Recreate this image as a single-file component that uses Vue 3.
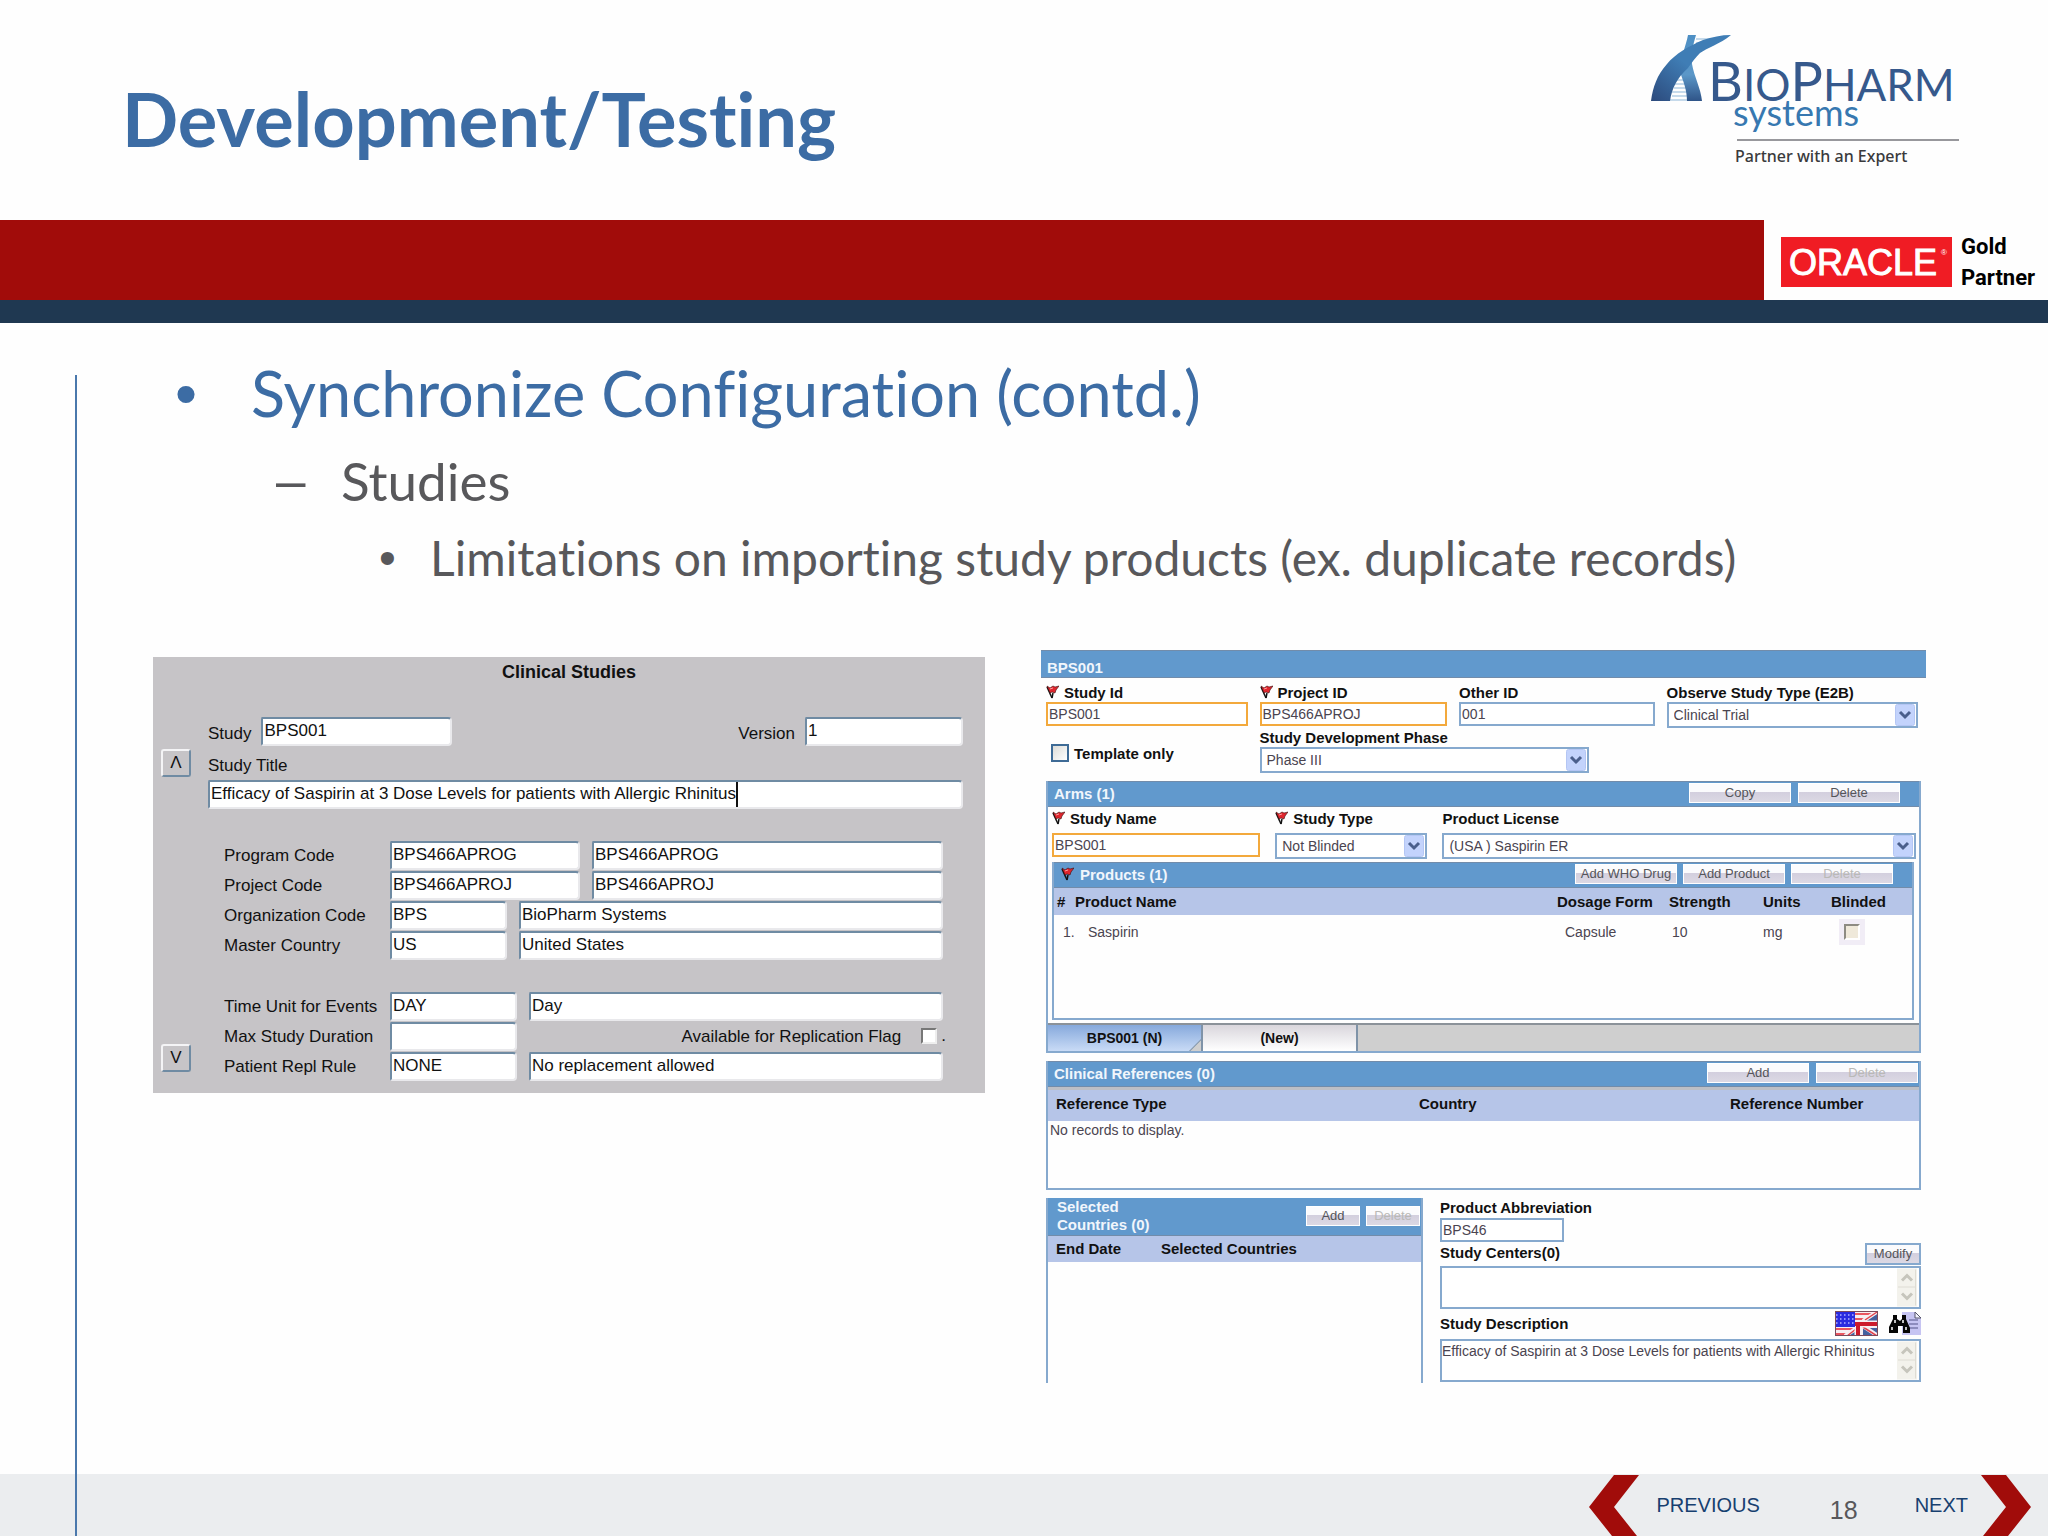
<template>
  <div class="slide">
    <header class="top">
      <h1>Development/Testing</h1>
      <svg class="brand" width="320" height="150" viewBox="0 0 320 150" role="img" aria-label="BioPharm Systems">
        <defs>
          <linearGradient id="helixA" x1="0" y1="1" x2="1" y2="0">
            <stop offset="0" stop-color="#2c4a7c" />
            <stop offset="0.5" stop-color="#3f7db5" />
            <stop offset="1" stop-color="#3f7db5" />
          </linearGradient>
          <linearGradient id="helixB" x1="0" y1="0" x2="0" y2="1">
            <stop offset="0" stop-color="#4d8fc4" />
            <stop offset="0.6" stop-color="#5b97c8" />
            <stop offset="1" stop-color="#2f5488" />
          </linearGradient>
        </defs>
        <g stroke="#8db6d8" stroke-width="1">
          <path d="M46 17h24M46 21h12M44 26h10M26 58h10M24 62h12M24 66h14M22 70h16M22 74h18M20 78h22" />
        </g>
        <path d="M38 13h8c-3 10-5 19-4 29 2 12 9 25 10 37H37c0-12-4-20-7-29 0-13 6-26 8-37z" fill="url(#helixB)" />
        <path d="M81 13C70 22 57 26 50 31 46 35 42 40 38 46 27 56 22 66 20 79H1c2-14 6-26 16-37C25 32 39 24 53 18c9-3 18-5 28-5z" fill="url(#helixA)" />
        <text class="brand-name" x="58" y="79"><tspan class="cap">B</tspan>IO<tspan class="cap">P</tspan>HARM</text>
        <text class="brand-sub" x="83" y="104">systems</text>
        <path d="M87 118h222" stroke="#98989c" stroke-width="2" />
        <text class="brand-tag" x="85" y="140">Partner with an Expert</text>
      </svg>
    </header>

    <div class="band">
      <div class="band-red"></div>
      <div class="partner">
        <svg class="oracle" width="171" height="50" viewBox="0 0 171 50" role="img" aria-label="Oracle">
          <rect width="171" height="50" fill="#f01c24" />
          <text x="8" y="38" class="oracle-text">ORACLE</text>
          <text x="160" y="18" class="oracle-reg">®</text>
        </svg>
        <div class="partner-level">Gold<br>Partner</div>
      </div>
    </div>
    <div class="band-navy"></div>

    <main class="body">
      <ul class="outline">
        <li class="lvl1"><span class="mark">•</span>Synchronize Configuration (contd.)</li>
        <li class="lvl2"><span class="mark">–</span>Studies</li>
        <li class="lvl3"><span class="mark">•</span>Limitations on importing study products (ex. duplicate records)</li>
      </ul>

      <div class="shots">
        <section class="oc">
          <h2>Clinical Studies</h2>
          <div class="oc-cols">
            <div class="oc-nav">
              <button type="button" aria-label="Previous">Λ</button>
              <button type="button" aria-label="Next">V</button>
            </div>
            <div class="oc-form">
              <div class="oc-line">
                <label for="oc-study">Study</label>
                <input id="oc-study" class="sunk w-code" v-model="oc.study">
                <label for="oc-version" class="push">Version</label>
                <input id="oc-version" class="sunk w-ver" v-model="oc.version">
              </div>
              <label for="oc-title" class="oc-title-label">Study Title</label>
              <div class="sunk title-box">
                <input id="oc-title" v-model="oc.title"><i class="caret"></i>
              </div>
              <div class="oc-rows">
                <div v-for="row in ocRows" :key="row.id" class="oc-row" :class="row.cls">
                  <label :for="row.id">{{ row.label }}</label>
                  <input :id="row.id" class="sunk code" v-model="row.code">
                  <input v-if="row.name !== null" class="sunk name" :aria-label="row.label + ' name'" v-model="row.name">
                  <div v-else class="flag-cell">
                    <label for="oc-repl">Available for Replication Flag</label>
                    <input id="oc-repl" type="checkbox" class="mini-check"><span>.</span>
                  </div>
                </div>
              </div>
            </div>
          </div>
        </section>

        <section class="argus">
          <h2 class="bar main-bar">BPS001</h2>

          <div class="study-grid">
            <div class="field">
              <label for="a-id"><svg class="req"><use href="#req" /></svg>Study Id</label>
              <input id="a-id" class="box required" value="BPS001">
            </div>
            <div class="field">
              <label for="a-proj"><svg class="req"><use href="#req" /></svg>Project ID</label>
              <input id="a-proj" class="box required" value="BPS466APROJ">
            </div>
            <div class="field">
              <label for="a-other">Other ID</label>
              <input id="a-other" class="box" value="001">
            </div>
            <div class="field">
              <label for="a-obs">Observe Study Type (E2B)</label>
              <div class="drop">
                <select id="a-obs"><option>Clinical Trial</option></select>
                <svg class="arrow"><use href="#arrow" /></svg>
              </div>
            </div>
            <div class="template">
              <input id="a-tpl" type="checkbox" class="tick"><label for="a-tpl">Template only</label>
            </div>
            <div class="field phase">
              <label for="a-phase">Study Development Phase</label>
              <div class="drop">
                <select id="a-phase"><option>Phase III</option></select>
                <svg class="arrow"><use href="#arrow" /></svg>
              </div>
            </div>
          </div>

          <div class="group arms">
            <div class="bar">
              <h3>Arms (1)</h3>
              <button type="button">Copy</button>
              <button type="button">Delete</button>
            </div>
            <div class="arm-grid">
              <div class="field">
                <label for="a-name"><svg class="req"><use href="#req" /></svg>Study Name</label>
                <input id="a-name" class="box required" value="BPS001">
              </div>
              <div class="field">
                <label for="a-type"><svg class="req"><use href="#req" /></svg>Study Type</label>
                <div class="drop">
                  <select id="a-type"><option>Not Blinded</option></select>
                  <svg class="arrow"><use href="#arrow" /></svg>
                </div>
              </div>
              <div class="field">
                <label for="a-lic">Product License</label>
                <div class="drop">
                  <select id="a-lic"><option>(USA ) Saspirin ER</option></select>
                  <svg class="arrow"><use href="#arrow" /></svg>
                </div>
              </div>
            </div>
            <div class="group products">
              <div class="bar">
                <svg class="req"><use href="#req" /></svg>
                <h3>Products (1)</h3>
                <button type="button">Add WHO Drug</button>
                <button type="button">Add Product</button>
                <button type="button" disabled>Delete</button>
              </div>
              <table>
                <thead>
                  <tr>
                    <th class="c-num">#</th>
                    <th>Product Name</th>
                    <th class="c-form">Dosage Form</th>
                    <th class="c-str">Strength</th>
                    <th class="c-unit">Units</th>
                    <th class="c-blind">Blinded</th>
                  </tr>
                </thead>
                <tbody>
                  <tr v-for="(p, i) in products" :key="p.name">
                    <td class="num">{{ i + 1 }}.</td>
                    <td class="pname">{{ p.name }}</td>
                    <td class="pform">{{ p.form }}</td>
                    <td class="pstr">{{ p.strength }}</td>
                    <td>{{ p.units }}</td>
                    <td><span class="blind"><input type="checkbox" class="mini-check" aria-label="Blinded" disabled></span></td>
                  </tr>
                </tbody>
              </table>
            </div>
            <div class="tabs">
              <button type="button" class="tab active">BPS001 (N)</button>
              <button type="button" class="tab">(New)</button>
            </div>
          </div>

          <div class="group refs">
            <div class="bar">
              <h3>Clinical References (0)</h3>
              <button type="button">Add</button>
              <button type="button" disabled>Delete</button>
            </div>
            <table>
              <thead>
                <tr>
                  <th>Reference Type</th>
                  <th class="c-country">Country</th>
                  <th class="c-refnum">Reference Number</th>
                </tr>
              </thead>
              <tbody>
                <tr><td colspan="3" class="empty">No records to display.</td></tr>
              </tbody>
            </table>
          </div>

          <div class="lower">
            <div class="group countries">
              <div class="bar">
                <h3>Selected Countries (0)</h3>
                <button type="button">Add</button>
                <button type="button" disabled>Delete</button>
              </div>
              <table>
                <thead>
                  <tr><th class="c-end">End Date</th><th>Selected Countries</th></tr>
                </thead>
              </table>
            </div>
            <div class="details">
              <label for="a-abbr">Product Abbreviation</label>
              <input id="a-abbr" class="box abbr" value="BPS46">
              <div class="detail-head">
                <label for="a-centers">Study Centers(0)</label>
                <button type="button" class="modify">Modify</button>
              </div>
              <div class="memo">
                <textarea id="a-centers"></textarea>
                <svg class="scroll"><use href="#scroll" /></svg>
              </div>
              <div class="detail-head icons">
                <label for="a-desc">Study Description</label>
                <svg width="43" height="25" viewBox="0 0 43 25">
                  <rect width="43" height="25" fill="#f6eef2" />
                  <path d="M20 3h22M20 8h14M0 18h18M0 23h12" stroke="#ea5560" stroke-width="2" />
                  <path d="M10 25 19 17h5v8zM28 25v-8h15v8zM28 10 43 0v10z" fill="#44609f" />
                  <path d="M22 17l-12 8M28 15l15 10M28 10 43 0" stroke="#f6eef2" stroke-width="4" />
                  <path d="M30 9 42 1M28 16l14 9M21 18l-9 7" stroke="#e0404c" stroke-width="1.500" />
                  <path d="M19 13h24M23 12v13" stroke="#f6eef2" stroke-width="7" />
                  <path d="M19 13h24M23 12v13" stroke="#cc1a2c" stroke-width="4" />
                  <rect width="20" height="16" fill="#2a2ae0" />
                  <path d="M1 4h18M1 8h18M1 12h18" stroke="#b4b4ff" stroke-width="1.500" stroke-dasharray="1.500 2.500" />
                  <rect x="0.500" y="0.500" width="42" height="24" fill="none" stroke="#7b4a5c" />
                </svg>
                <svg width="32" height="25" viewBox="0 0 32 25">
                  <path d="M13 1h13l6 6v17H13z" fill="#c6c4f2" />
                  <path d="M26 1v6h6z" fill="#f4f4ff" stroke="#55556a" />
                  <path d="M20 9h9M20 13h9M20 17h9" stroke="#55558a" />
                  <path d="M4 4h4v4l3 2 2-2V4h4v4l4 9v5h-7v-7h-5v7H0v-6L4 8z" fill="#050505" />
                  <path d="M3 16v3M6 9v3M14 9v3M17 16v3" stroke="#fff" stroke-width="1.500" />
                </svg>
              </div>
              <div class="memo">
                <textarea id="a-desc" v-model="oc.title"></textarea>
                <svg class="scroll"><use href="#scroll" /></svg>
              </div>
            </div>
          </div>
        </section>
      </div>
    </main>

    <footer class="foot">
      <span class="foot-rule"></span>
      <a href="#prev" class="nav-link">
        <svg width="50" height="62" viewBox="0 0 50 62"><path d="M25 1h25L25 33l23 29H23L0 33z" fill="#a10c0a" /></svg>
        PREVIOUS
      </a>
      <span class="page">18</span>
      <a href="#next" class="nav-link">
        NEXT
        <svg width="50" height="62" viewBox="0 0 50 62"><path d="M25 1H0l25 32L2 62h25l23-29z" fill="#a10c0a" /></svg>
      </a>
    </footer>

    <svg class="symbols" width="0" height="0" aria-hidden="true">
      <symbol id="req" viewBox="0 0 13 14">
        <path d="M1 2l5 11" stroke="#111" stroke-width="1.500" fill="none" />
        <path d="M6 13l1-5" stroke="#111" stroke-width="1.500" fill="none" />
        <path d="M1 1l3 2 3-2 2 1 4-1-3 4-1 3-3-1-2 1z" fill="#e0262e" stroke="#3a0a0a" stroke-width="0.600" />
        <path d="M4 4l3-1" stroke="#ff9a9a" />
      </symbol>
      <symbol id="arrow" viewBox="0 0 20 22">
        <rect x="0.500" y="0.500" width="19" height="21" rx="2" fill="#c3d3fc" stroke="#b4c6f4" />
        <path d="M5 8l5 5 5-5" fill="none" stroke="#4a5f8c" stroke-width="3" />
      </symbol>
      <symbol id="scroll" viewBox="0 0 20 38">
        <rect width="20" height="38" fill="#f3f2ec" />
        <path d="M1 18.500h18M18.500 1v36" stroke="#dedcd4" />
        <path d="M5 12l5-5 5 5M5 25l5 5 5-5" fill="none" stroke="#c6c5bc" stroke-width="3" />
      </symbol>
    </svg>
  </div>
</template>

<script setup>
import { reactive, ref } from 'vue'

const oc = reactive({
  study: 'BPS001',
  version: '1',
  title: 'Efficacy of Saspirin at 3 Dose Levels for patients with Allergic Rhinitus'
})

const ocRows = ref([
  { id: 'oc-prog', label: 'Program Code', code: 'BPS466APROG', name: 'BPS466APROG', cls: 'long' },
  { id: 'oc-proj', label: 'Project Code', code: 'BPS466APROJ', name: 'BPS466APROJ', cls: 'long' },
  { id: 'oc-org', label: 'Organization Code', code: 'BPS', name: 'BioPharm Systems', cls: 'short' },
  { id: 'oc-country', label: 'Master Country', code: 'US', name: 'United States', cls: 'short' },
  { id: 'oc-time', label: 'Time Unit for Events', code: 'DAY', name: 'Day', cls: 'mid spaced' },
  { id: 'oc-max', label: 'Max Study Duration', code: '', name: null, cls: 'mid' },
  { id: 'oc-rule', label: 'Patient Repl Rule', code: 'NONE', name: 'No replacement allowed', cls: 'mid' }
])

const products = ref([
  { name: 'Saspirin', form: 'Capsule', strength: '10', units: 'mg' }
])
</script>

<style>
body { background: #fefefe; }
</style>

<style scoped>
.slide {
  min-height: 100vh; display: flex; flex-direction: column;
  font-family: "Liberation Sans", Arial, sans-serif; color: #111;
}
.slide * { box-sizing: border-box; }
h1, h2, h3, ul { margin: 0; padding: 0; }
input, select, textarea, button { font: inherit; color: inherit; margin: 0; border-radius: 0; }
svg { display: block; flex: none; }
.symbols { position: absolute; }

/* header */
.top { height: 220px; display: flex; justify-content: space-between; padding: 22px 70px 0 122px; }
h1 { font: bold 74px/100px Lato, sans-serif; font-variant-ligatures: none; color: #3c6ca4; padding-top: 47px; }
.brand { margin-right: 8px; }
.brand-name { font: 44px Lato, sans-serif; fill: #36598c; }
.brand-name .cap { font-size: 54px; }
.brand-sub { font: 36px Lato, sans-serif; fill: #3778b0; }
.brand-tag { font: 500 16px "Noto Sans", sans-serif; fill: #3a3a3c; }
.band { height: 80px; display: flex; }
.band-red { flex: 1; background: #a10c0a; }
.partner { width: 284px; display: flex; gap: 9px; padding: 17px 0 0 17px; }
.oracle-text { font: 36px "Liberation Sans", sans-serif; fill: #fff; stroke: #fff; stroke-width: 1px; }
.oracle-reg { font: 8px "Liberation Sans", sans-serif; fill: #fff; }
.partner-level { font: bold 22px/31px Roboto, sans-serif; color: #000; margin-top: -6px; }
.band-navy { height: 23px; background: #1f3851; }

/* outline */
.body { flex: 1; margin: 52px 0 0 75px; border-left: 2px solid #4a78ac; }
.outline { list-style: none; font-family: Lato, sans-serif; font-variant-ligatures: none; color: #58585b; }
.outline li { display: flex; }
.outline .mark { font-family: "Liberation Sans", Arial, sans-serif; }
.lvl1 { font-size: 63px; line-height: 76px; color: #3c6ca4; padding-left: 98px; margin-top: -20px; }
.lvl1 .mark { width: 76px; }
.lvl2 { font-size: 53px; line-height: 62px; padding-left: 199px; margin-top: 19px; }
.lvl2 .mark { width: 65px; }
.lvl3 { font-size: 48px; line-height: 56px; padding-left: 302px; margin-top: 18px; }
.lvl3 .mark { width: 51px; }

.shots {
  display: grid; grid-template-columns: 832fr 885fr; gap: 56px; align-items: start;
  padding: 0 122px 0 76px; margin-top: 64px;
}

/* left form */
.oc { background: #c6c4c7; margin-top: 7px; padding: 5px 0 12px; font-size: 17px; }
.oc h2 { font-size: 18px; line-height: 20px; text-align: center; }
.oc-cols { display: grid; grid-template-columns: 30px 1fr; gap: 17px; margin-top: 35px; padding: 0 22px 0 8px; }
.oc-nav { display: flex; flex-direction: column; justify-content: space-between; padding: 32px 0 9px; }
.oc-nav button {
  height: 28px; padding: 0; background: #c6c4c7; border: 2px solid; border-radius: 3px;
  border-color: #f4f4f6 #6f8ba3 #6f8ba3 #f4f4f6;
}
.sunk {
  height: 29px; min-width: 0; background: #fff; border: 2px solid; padding: 0 2px 1px 1px;
  border-color: #6f8ba3 #e9e9ec #e9e9ec #6f8ba3; border-radius: 2px 4px 4px 2px; outline: none;
}
.oc-line { display: flex; align-items: center; gap: 10px; }
.oc-line label { padding-top: 4px; }
.oc-line .push { margin-left: auto; }
.w-code { width: 191px; }
.w-ver { width: 158px; }
.oc-title-label { display: block; line-height: 20px; margin: 10px 0 4px; }
.title-box { display: flex; }
.title-box input { border: 0; padding: 0; background: none; outline: none; field-sizing: content; }
.caret { width: 2px; height: 25px; background: #111; }
.oc-rows { margin: 31px 20px 0 16px; }
.oc-row { display: grid; align-items: center; column-gap: 12px; height: 30px; }
.oc-row.long { grid-template-columns: 154px 190px 1fr; }
.oc-row.short { grid-template-columns: 154px 117px 1fr; }
.oc-row.mid { grid-template-columns: 154px 127px 1fr; }
.oc-row.spaced { margin-top: 31px; }
.oc-row > label { white-space: nowrap; padding-top: 2px; }
.flag-cell { display: flex; justify-content: flex-end; align-items: center; gap: 4px; margin-right: -3px; }
.flag-cell label { margin-right: 16px; padding-top: 2px; }
.mini-check {
  appearance: none; width: 16px; height: 16px; background: #fff; border: 2px solid;
  border-color: #777 #eee #eee #777;
}

/* right form */
.argus { font-size: 14px; min-width: 0; }
.argus label, .argus th, .argus h3, .argus h2 { font-size: 15px; font-weight: bold; text-align: left; }
.argus label { display: flex; align-items: center; height: 18px; white-space: nowrap; }
.req { width: 13px; height: 14px; margin-right: 5px; }
.bar {
  display: flex; align-items: center; gap: 7px; background: #6199cd; color: #f1f6fc;
  border: solid #728caa; border-width: 1px 0; height: 26px; padding: 0 19px 2px 6px;
}
.bar h3 { flex: 1; white-space: nowrap; }
.bar.main-bar { height: 28px; padding: 7px 0 0 6px; }
.bar button, .modify {
  width: 102px; height: 20px; padding: 0; font-size: 13px; line-height: 16px; color: #55555a;
  border: 1px solid #fff; white-space: nowrap;
  background: linear-gradient(#fbfbfd 45%, #d3cfde 46%, #dcd9e4);
}
.bar button:disabled { color: #b9b9b6; }
.box {
  width: 100%; min-width: 0; height: 24px; border: 2px solid #86a9ce; background: #fff;
  padding: 0 1px; display: block; outline: none; color: #4a4450;
}
.box.required { border-color: #f3a93c; }
.drop { display: grid; align-items: center; }
.drop select {
  grid-area: 1 / 1; width: 100%; height: 26px; appearance: none; background: #fff;
  border: 2px solid #86a9ce; padding: 0 24px 0 5px; outline: none; color: #4a4450;
}
.arrow { grid-area: 1 / 1; justify-self: end; width: 20px; height: 22px; margin-right: 3px; pointer-events: none; }
.study-grid {
  display: grid; grid-template-columns: 202fr 188fr 196fr 252fr; column-gap: 12px;
  padding: 5px 8px 0 5px;
}
.field label { margin-bottom: 1px; }
.study-grid .field .box { margin-top: 1px; }
.template { display: flex; gap: 5px; align-items: flex-start; padding: 16px 0 0 5px; }
.tick { appearance: none; width: 18px; height: 18px; border: 2px solid #3e6b96; background: linear-gradient(135deg, #dcdcd8, #fff); }
.phase { grid-column: 2 / 4; margin-right: 66px; }
.group { border: 2px solid #86a9ce; border-top: 0; }
.argus > .group { margin: 8px 5px 0; }
.arm-grid { display: grid; grid-template-columns: 208fr 152fr 473fr; column-gap: 15px; padding: 2px 3px 3px 4px; }
.arm-grid label { margin-bottom: 6px; }
.arm-grid .box { margin-top: 1px; }
.products { margin: 0 5px 3px 4px; height: 158px; }
.products .bar { padding-left: 7px; gap: 6px; }
.products .req { margin-right: 0; }
table { width: 100%; border-collapse: collapse; table-layout: fixed; }
th { background: #b6c5e8; height: 27px; padding: 0; white-space: nowrap; }
td { padding: 0; color: #4a4450; }
.c-num { width: 21px; padding-left: 3px; }
.c-form { width: 112px; }
.c-str { width: 94px; }
.c-unit { width: 68px; }
.c-blind { width: 81px; }
.products td { height: 34px; }
.products .num { padding-left: 9px; }
.products .pname { padding-left: 13px; }
.products .pform { padding-left: 8px; }
.products .pstr { padding-left: 3px; }
.blind { display: grid; place-items: center; width: 26px; height: 26px; margin-left: 8px; background: #f1edf6; }
.blind .mini-check { background: #efe9da; border-color: #8d8b82 #fff #fff #8d8b82; }
.tabs { display: flex; background: #cfcfcf; border-top: 2px solid #8b9299; height: 28px; }
.tab {
  width: 155px; padding: 0; font-size: 14px; font-weight: bold; border: 0;
  border-right: 2px solid #7f93a8; background: linear-gradient(#d9d6dc, #fff);
}
.tab.active { background: linear-gradient(315deg, #cfcfcf 7px, #7f93a8 8px, transparent 9px), linear-gradient(#86a9dc, #c9dbf6); }
.refs { height: 129px; }
.refs .bar { padding-right: 1px; }
.refs th { height: 32px; border-top: 3px solid #bcbfc6; padding-bottom: 3px; }
.refs th:first-child { padding-left: 8px; }
.c-country { width: 311px; }
.c-refnum { width: 189px; }
.empty { height: 18px; padding-left: 2px; }
.lower { display: grid; grid-template-columns: 377fr 481fr; gap: 17px; margin: 8px 5px 0; }
.countries { border-bottom: 0; height: 185px; }
.countries .bar { height: 38px; padding: 0 1px 1px 9px; gap: 6px; border-top: 0; }
.countries h3 { line-height: 18px; white-space: normal; padding-right: 120px; }
.countries .bar button { width: 54px; flex: none; }
.countries th { height: 26px; padding-bottom: 1px; }
.c-end { width: 113px; }
.countries .c-end { padding-left: 8px; }
.abbr { width: 124px; margin-top: 2px; }
.detail-head { display: flex; justify-content: space-between; align-items: center; height: 24px; }
.detail-head label { padding-bottom: 4px; }
.modify { width: 56px; height: 22px; border: 2px solid #86a9ce; }
.memo { display: flex; height: 43px; border: 2px solid #86a9ce; background: #fff; padding-right: 2px; }
.memo textarea {
  flex: 1; min-width: 0; border: 0; padding: 1px 0; resize: none; outline: none; overflow: hidden;
  background: none; line-height: 18px; color: #4a4450; white-space: nowrap;
}
.scroll { width: 20px; height: 39px; }
.icons { height: 30px; gap: 11px; padding-bottom: 2px; }
.icons label { flex: 1; padding-bottom: 0; }

/* footer */
.foot { height: 62px; display: flex; align-items: center; background: #ebedef; padding-right: 17px; }
.foot-rule { width: 2px; height: 62px; margin: 0 auto 0 75px; background: #4a78ac; }
.nav-link { display: flex; align-items: center; gap: 17px; font-size: 20px; color: #17406f; text-decoration: none; height: 62px; }
.nav-link:last-child { gap: 13px; }
.page { font-size: 25px; color: #58585b; padding-top: 10px; margin: 0 57px 0 70px; }
</style>
